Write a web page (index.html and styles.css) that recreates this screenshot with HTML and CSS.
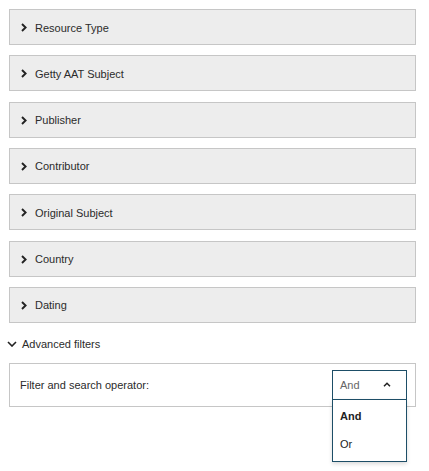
FILE: index.html
```html
<!DOCTYPE html>
<html>
<head>
<meta charset="utf-8">
<link rel="stylesheet" href="styles.css">
</head>
<body>
<div class="page">
  <div class="facets">
    <div class="facet"><svg class="chev" viewBox="0 0 6 9" width="6" height="9"><path d="M1 1 L4.6 4.5 L1 8" fill="none" stroke="#222" stroke-width="1.9"/></svg><span>Resource Type</span></div>
    <div class="facet"><svg class="chev" viewBox="0 0 6 9" width="6" height="9"><path d="M1 1 L4.6 4.5 L1 8" fill="none" stroke="#222" stroke-width="1.9"/></svg><span>Getty AAT Subject</span></div>
    <div class="facet"><svg class="chev" viewBox="0 0 6 9" width="6" height="9"><path d="M1 1 L4.6 4.5 L1 8" fill="none" stroke="#222" stroke-width="1.9"/></svg><span>Publisher</span></div>
    <div class="facet"><svg class="chev" viewBox="0 0 6 9" width="6" height="9"><path d="M1 1 L4.6 4.5 L1 8" fill="none" stroke="#222" stroke-width="1.9"/></svg><span>Contributor</span></div>
    <div class="facet"><svg class="chev" viewBox="0 0 6 9" width="6" height="9"><path d="M1 1 L4.6 4.5 L1 8" fill="none" stroke="#222" stroke-width="1.9"/></svg><span>Original Subject</span></div>
    <div class="facet"><svg class="chev" viewBox="0 0 6 9" width="6" height="9"><path d="M1 1 L4.6 4.5 L1 8" fill="none" stroke="#222" stroke-width="1.9"/></svg><span>Country</span></div>
    <div class="facet"><svg class="chev" viewBox="0 0 6 9" width="6" height="9"><path d="M1 1 L4.6 4.5 L1 8" fill="none" stroke="#222" stroke-width="1.9"/></svg><span>Dating</span></div>
  </div>
  <div class="adv-toggle"><svg class="chev-down" viewBox="0 0 10 6" width="10" height="6"><path d="M1 1 L5 5 L9 1" fill="none" stroke="#222" stroke-width="1.6"/></svg><span>Advanced filters</span></div>
  <div class="adv-box">
    <span class="adv-label">Filter and search operator:</span>
    <div class="select">
      <div class="select-head"><span>And</span><svg viewBox="0 0 8 5" width="8" height="5"><path d="M1 4.2 L4 1.2 L7 4.2" fill="none" stroke="#222" stroke-width="1.5"/></svg></div>
      <div class="menu">
        <div class="opt sel">And</div>
        <div class="opt">Or</div>
      </div>
    </div>
  </div>
</div>
</body>
</html>
```
FILE: styles.css
```css
* { box-sizing: border-box; }
html, body { margin: 0; padding: 0; background: #fff; }
body {
  font-family: "Liberation Sans", Arial, sans-serif;
  font-size: 11px;
  color: #2b2b2b;
}
.page {
  width: 429px;
  height: 471px;
  padding: 9px 13px 0 9px;
}
.facets {
  display: flex;
  flex-direction: column;
  gap: 10.33px;
}
.facet {
  height: 36px;
  background: #ededed;
  border: 1px solid #c6c6c6;
  display: flex;
  align-items: center;
  padding-left: 11px;
  gap: 8px;
  padding-top: 1px;
}
.chev { display: block; }
.adv-toggle {
  display: flex;
  align-items: center;
  gap: 5px;
  margin-top: 15px;
  height: 12px;
  margin-left: -2px;
}
.chev-down { display: block; }
.adv-box {
  margin-top: 13px;
  height: 44px;
  border: 1px solid #c6c6c6;
  display: flex;
  align-items: center;
  justify-content: space-between;
  padding-left: 10px;
  padding-right: 8px;
  position: relative;
}
.select {
  position: relative;
  width: 75px;
  height: 30px;
  align-self: flex-start;
  margin-top: 6px;
}
.select-head {
  height: 30px;
  border: 1px solid #1d4e67;
  display: flex;
  align-items: center;
  justify-content: space-between;
  padding: 0 15px 0 7px;
  color: #666;
  background: #fff;
}
.select-head svg { display: block; }
.menu {
  position: absolute;
  top: 29px;
  left: 0;
  width: 75px;
  border: 1px solid #1d4e67;
  background: #fff;
  box-shadow: 0 2px 4px rgba(0,0,0,0.15);
  padding: 2px 0 3px;
}
.opt {
  height: 28px;
  line-height: 28px;
  padding-left: 7px;
  color: #222;
}
.opt.sel { font-weight: bold; }
```
